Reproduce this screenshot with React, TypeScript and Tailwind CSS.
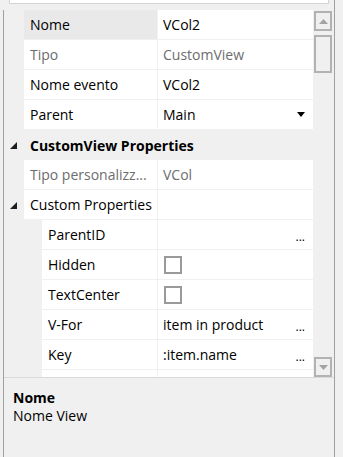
import type { ReactNode } from "react";

type Row = {
  label: string;
  value?: string;
  kind?: "text" | "check" | "dots" | "select";
  readOnly?: boolean;
  nested?: boolean;
  selected?: boolean;
  expander?: boolean;
};

const rowsTop: Row[] = [
  { label: "Nome", value: "VCol2", selected: true },
  { label: "Tipo", value: "CustomView", readOnly: true },
  { label: "Nome evento", value: "VCol2" },
  { label: "Parent", value: "Main", kind: "select" },
];

const rowsCustom: Row[] = [
  { label: "Tipo personalizz...", value: "VCol", readOnly: true },
  { label: "Custom Properties", expander: true },
  { label: "ParentID", value: "", kind: "dots", nested: true },
  { label: "Hidden", kind: "check", nested: true },
  { label: "TextCenter", kind: "check", nested: true },
  { label: "V-For", value: "item in product", kind: "dots", nested: true },
  { label: "Key", value: ":item.name", kind: "dots", nested: true },
];

const font = { fontFamily: '"Segoe UI", "Open Sans", sans-serif' };

function Expander() {
  return (
    <svg width="7" height="7" viewBox="0 0 7 7" className="block">
      <polygon points="7,0 7,7 0,7" fill="#1e1e1e" />
    </svg>
  );
}

function Value({ row }: { row: Row }) {
  const color = row.readOnly ? "text-[#6d6d6d]" : "text-black";
  if (row.kind === "check") {
    return (
      <div className="flex h-full items-center pl-[6px]">
        <div className="h-[18px] w-[18px] border-2 border-[#9a9a9a] bg-white" />
      </div>
    );
  }
  return (
    <div className={`flex h-full items-center justify-between pl-[5px] pr-[8px] ${color}`}>
      <span className="whitespace-nowrap">{row.value}</span>
      {row.kind === "dots" ? (
        <span className="relative top-[2px] text-[12px] leading-none text-black">...</span>
      ) : null}
      {row.kind === "select" ? (
        <svg width="8" height="5" viewBox="0 0 8 5">
          <polygon points="0,0 8,0 4,5" fill="#000" />
        </svg>
      ) : null}
    </div>
  );
}

function PropRow({ row }: { row: Row }) {
  return (
    <div className="flex h-[30px]">
      <div
        className={`flex shrink-0 items-center bg-[#f0f0f0] pl-[6px] ${row.nested ? "w-[38px]" : "w-[20px]"}`}
      >
        {row.expander ? <Expander /> : null}
      </div>
      <div
        className={[
          "flex shrink-0 items-center whitespace-nowrap border-b border-[#f0f0f0] pl-[6px]",
          row.nested ? "w-[115px]" : "w-[133px]",
          row.selected ? "bg-[#e9e9e9]" : "bg-white",
          row.readOnly ? "text-[#6d6d6d]" : "text-black",
        ].join(" ")}
      >
        {row.label}
      </div>
      <div className="w-[156px] shrink-0 border-b border-l border-[#f0f0f0] bg-white">
        {row.expander ? null : <Value row={row} />}
      </div>
    </div>
  );
}

function Category({ children }: { children: ReactNode }) {
  return (
    <div className="flex h-[30px] items-center bg-[#f0f0f0]">
      <div className="flex w-[20px] shrink-0 items-center pl-[6px]">
        <Expander />
      </div>
      <div className="pl-[6px] font-bold text-black">{children}</div>
    </div>
  );
}

function ScrollButton({ up }: { up: boolean }) {
  return (
    <div className="ml-[1px] flex h-[20px] w-[18px] items-center justify-center border-2 border-[#b2b2b2] bg-[#f0f0f0]">
      <svg width="9" height="5" viewBox="0 0 9 5">
        <polygon points={up ? "0,5 9,5 4.5,0" : "0,0 9,0 4.5,5"} fill="#a3a3a3" />
      </svg>
    </div>
  );
}

export default function App() {
  return (
    <div className="flex h-[457px] w-[343px] bg-[#f0f0f0] text-[14px]" style={font}>
      <div className="flex w-[335px] flex-col border-r border-[#a0a0a0]">
        <div className="ml-[9px] h-[4px] w-[320px] border-x border-b border-[#d4d4d4] bg-white" />
        <div className="ml-[3px] mt-[6px] flex flex-1 flex-col border-l border-[#a0a0a0]">
          <div className="flex h-[367px]">
            <div className="w-[309px] overflow-hidden">
              {rowsTop.map((row) => (
                <PropRow key={row.label} row={row} />
              ))}
              <Category>CustomView Properties</Category>
              {rowsCustom.map((row) => (
                <PropRow key={row.label} row={row} />
              ))}
              <PropRow row={{ label: "", value: "", nested: true }} />
            </div>
            <div className="flex w-[21px] flex-col bg-[#f0f0f0] pt-[1px]">
              <ScrollButton up />
              <div className="ml-[1px] mt-[4px] h-[38px] w-[18px] border-2 border-[#b2b2b2] bg-[#f0f0f0]" />
              <div className="mt-auto">
                <ScrollButton up={false} />
              </div>
            </div>
          </div>
          <div className="flex-1 border-t border-[#dadada] pl-[9px] pt-[11px] leading-[18px] text-black">
            <div className="font-bold">Nome</div>
            <div>Nome View</div>
          </div>
        </div>
      </div>
    </div>
  );
}
